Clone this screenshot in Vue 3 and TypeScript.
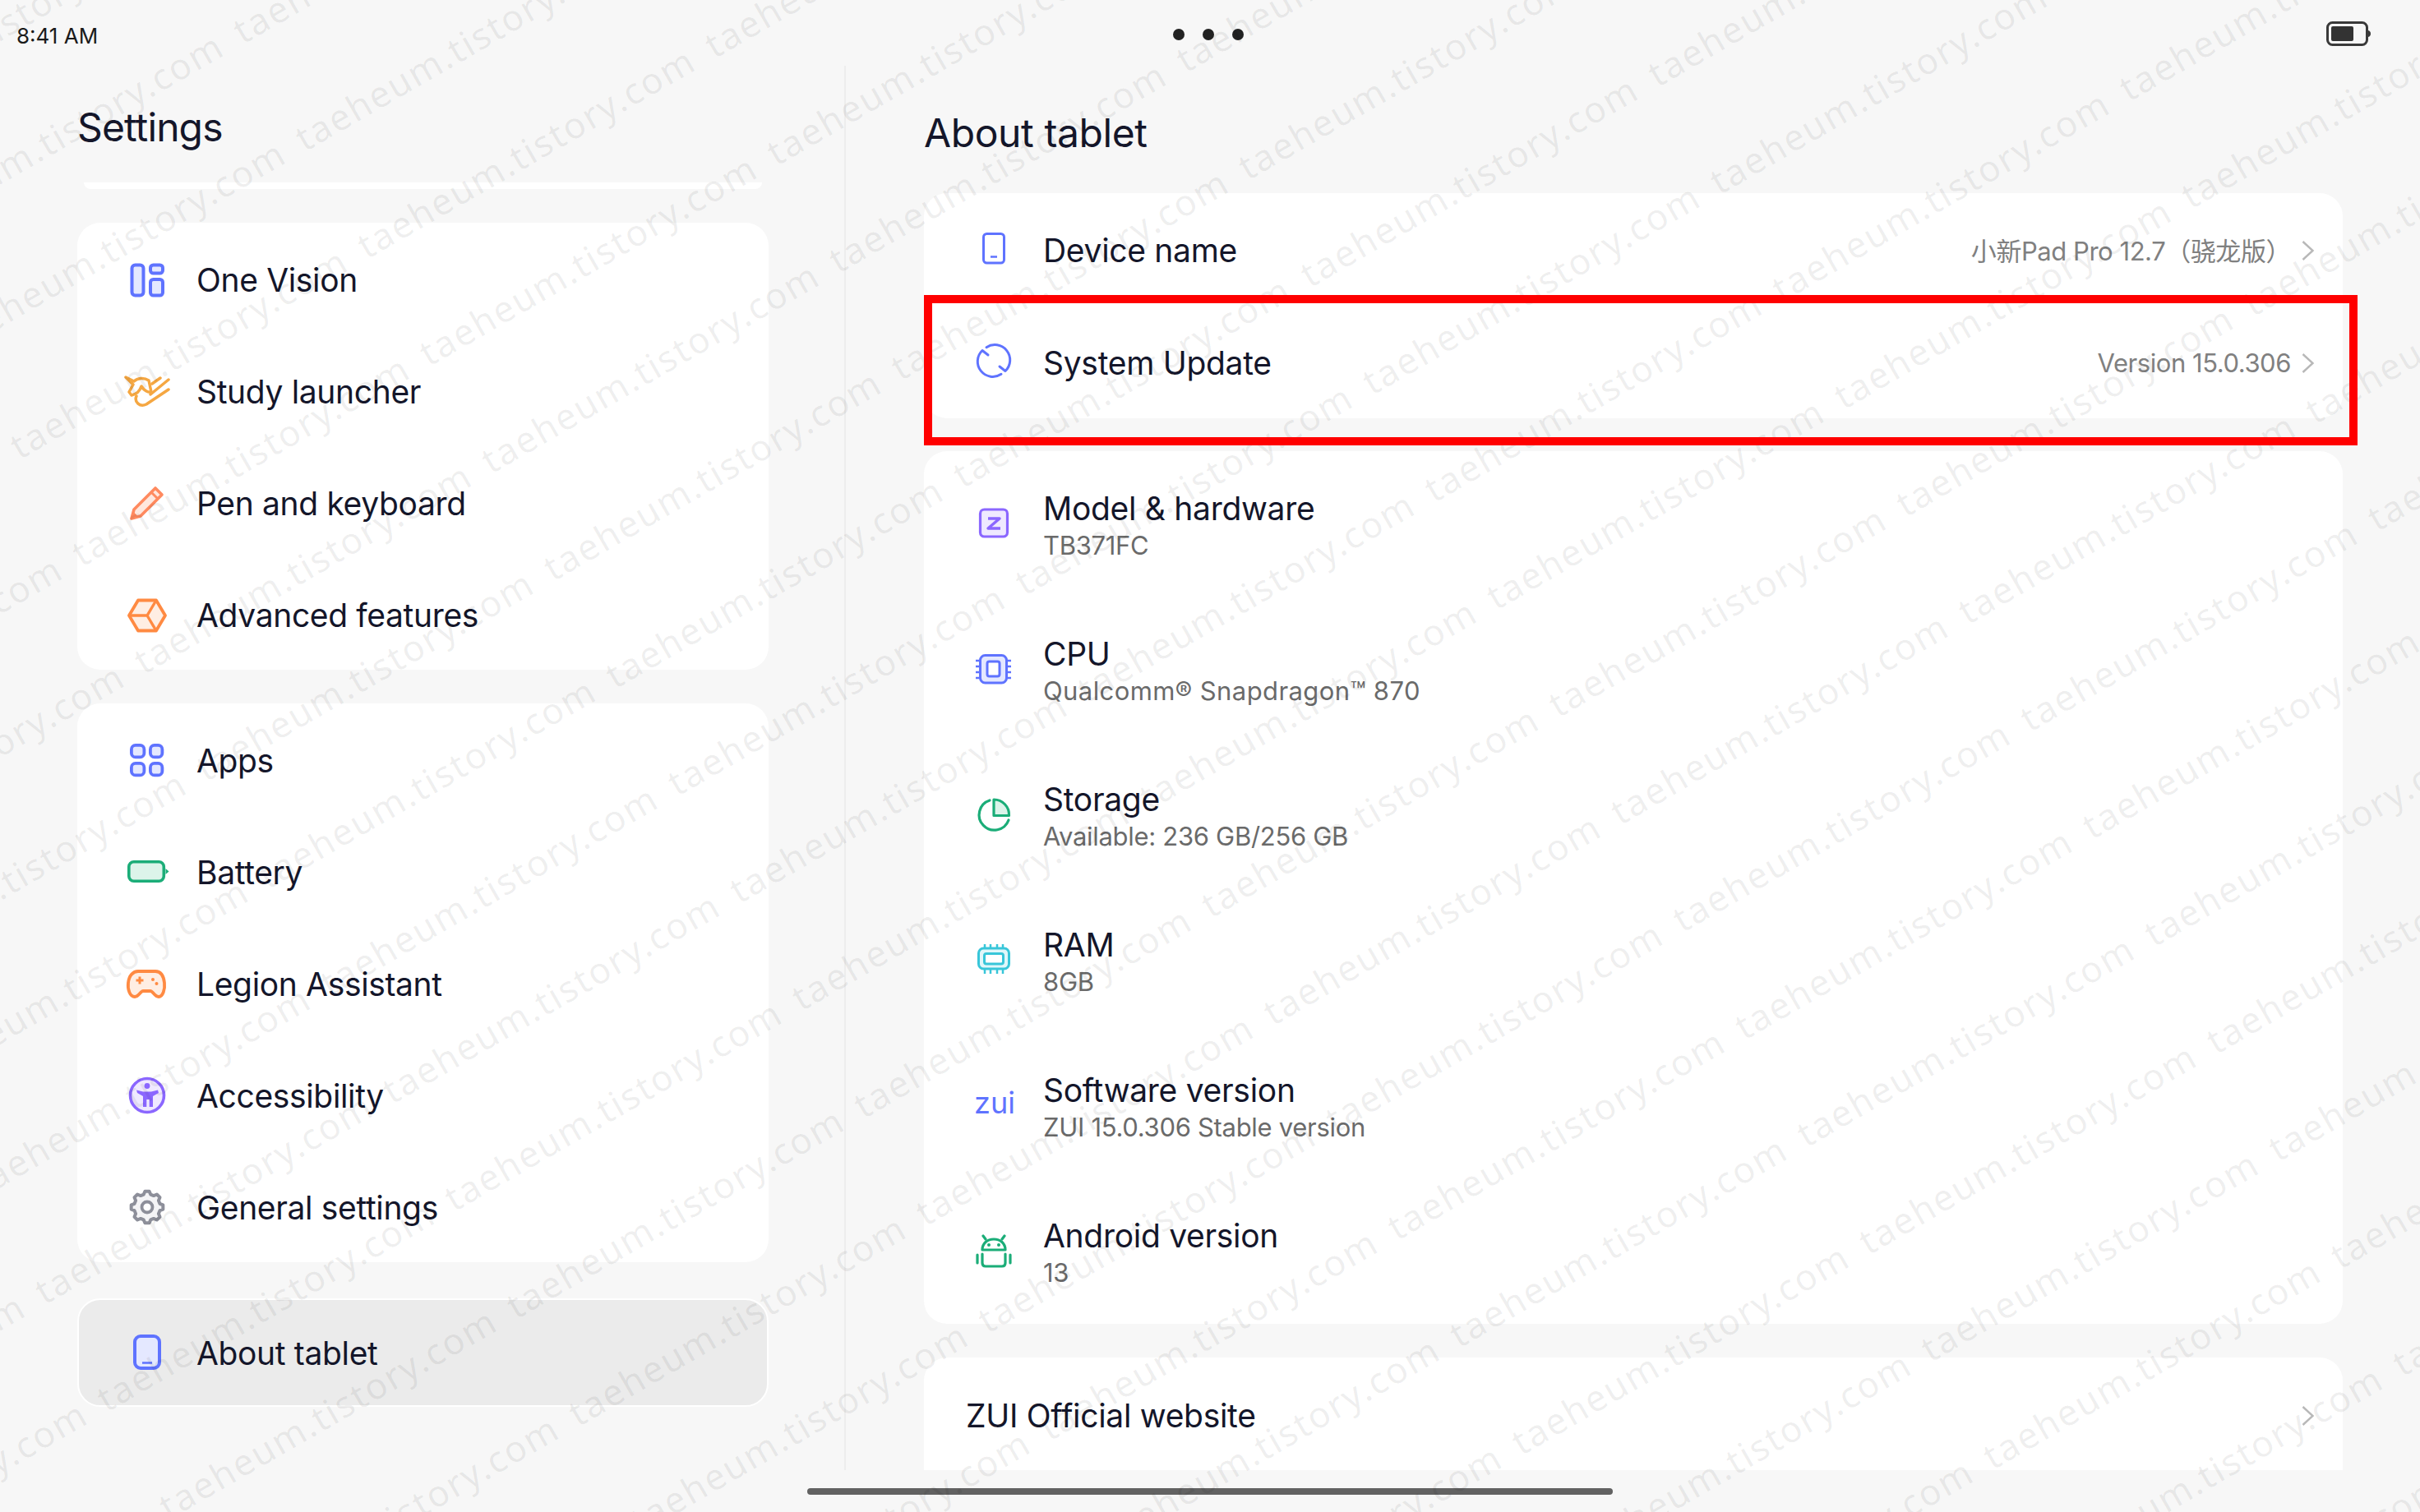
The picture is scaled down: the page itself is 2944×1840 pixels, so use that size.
<script setup lang="ts">
interface NavRow { label: string; icon: string }
interface InfoRow { title: string; sub: string; icon: string; wide?: boolean }

const groupOne: NavRow[] = [
  { label: 'One Vision', icon: 'vision' },
  { label: 'Study launcher', icon: 'study' },
  { label: 'Pen and keyboard', icon: 'pen' },
  { label: 'Advanced features', icon: 'cube' },
]
const groupTwo: NavRow[] = [
  { label: 'Apps', icon: 'apps' },
  { label: 'Battery', icon: 'battery' },
  { label: 'Legion Assistant', icon: 'game' },
  { label: 'Accessibility', icon: 'access' },
  { label: 'General settings', icon: 'gear' },
]
const infoRows: InfoRow[] = [
  { title: 'Model & hardware', sub: 'TB371FC', icon: 'model' },
  { title: 'CPU', sub: 'Qualcomm® Snapdragon™ 870', icon: 'cpu', wide: true },
  { title: 'Storage', sub: 'Available: 236 GB/256 GB', icon: 'storage' },
  { title: 'RAM', sub: '8GB', icon: 'ram' },
  { title: 'Software version', sub: 'ZUI 15.0.306 Stable version', icon: 'zui' },
  { title: 'Android version', sub: '13', icon: 'android' },
]
const wmRows = Array.from({ length: 21 }, (_, i) => i)
const wmCols = Array.from({ length: 9 }, (_, i) => i)
const wmText = 'taeheum.tistory.com'

function gearPath(cx: number, cy: number, outer: number, inner: number, teeth: number): string {
  const pts: string[] = []
  const step = (Math.PI * 2) / teeth
  for (let i = 0; i < teeth; i++) {
    const a = i * step - Math.PI / 2
    const pairs: [number, number][] = [
      [inner, a - step * 0.34],
      [outer, a - step * 0.17],
      [outer, a + step * 0.17],
      [inner, a + step * 0.34],
    ]
    for (const [r, t] of pairs) {
      pts.push(`${(cx + r * Math.cos(t)).toFixed(2)} ${(cy + r * Math.sin(t)).toFixed(2)}`)
    }
  }
  return 'M' + pts.join('L') + 'Z'
}
const gear = gearPath(28, 27, 19.5, 16, 8)
</script>

<template>
  <div class="screen">
    <header class="status">
      <span class="time">8:41 AM</span>
      <div class="dots"><i></i><i></i><i></i></div>
      <svg class="batt" width="54" height="30" viewBox="0 0 54 30">
        <rect x="1.500" y="1.500" width="48" height="27" rx="6" fill="none" stroke="#3a3a3a" stroke-width="3" />
        <rect x="6" y="6" width="27" height="18" rx="2" fill="#333" />
        <path d="M51 11c2 .5 3 2 3 4s-1 3.500-3 4z" fill="#3a3a3a" />
      </svg>
    </header>

    <main class="body">
      <aside class="left">
        <h1 class="left-title">Settings</h1>
        <div class="strip"></div>
        <section class="nav-card">
          <div v-for="r in groupOne" :key="r.label" class="nav-row">
            <svg class="ic" width="56" height="56" viewBox="0 0 56 56" fill="none">
              <template v-if="r.icon === 'vision'">
                <rect x="9.500" y="9.500" width="14" height="37" rx="4" fill="#e4e8ff" stroke="#5f73ff" stroke-width="4" />
                <rect x="32" y="9.500" width="15" height="10" rx="3.500" fill="#e4e8ff" stroke="#5f73ff" stroke-width="4" />
                <rect x="32" y="27" width="15" height="19.500" rx="3.500" fill="#e4e8ff" stroke="#5f73ff" stroke-width="4" />
              </template>
              <template v-else-if="r.icon === 'study'">
                <g stroke="#f5a742" stroke-width="3.500" stroke-linecap="round" stroke-linejoin="round">
                  <path d="M2 10L12 15C16 11 24 10 30 14L33 28C29 29 24 26 21 21C19 27 14 31 9 32L6 28L11 19Z" />
                  <path d="M15 33C12 40 19 47 27 43L54 25M32 31L54 13M34 18L44 11" />
                </g>
              </template>
              <template v-else-if="r.icon === 'pen'">
                <path d="M9 46l3-11 26-26 8 8-26 26z" fill="#ffe7dd" stroke="#ff8a5f" stroke-width="3.600" stroke-linejoin="round" />
                <path d="M9 46l2.500-8 5.500 5.500z" fill="#ff8a5f" />
                <path d="M33 14l8 8" stroke="#ff8a5f" stroke-width="3" />
              </template>
              <template v-else-if="r.icon === 'cube'">
                <path d="M17 9.500h22L50 28 39 46.500H17L6 28z" fill="#ffeee3" stroke="#ff8a42" stroke-width="3.800" stroke-linejoin="round" />
                <path d="M6 28h22l11-18.500M28 28l11 18.500" stroke="#ff8a42" stroke-width="3.400" />
              </template>
            </svg>
            <span class="nav-label">{{ r.label }}</span>
          </div>
        </section>
        <section class="nav-card second">
          <div v-for="r in groupTwo" :key="r.label" class="nav-row">
            <svg class="ic" width="56" height="56" viewBox="0 0 56 56" fill="none">
              <template v-if="r.icon === 'apps'">
                <g fill="#e4e8ff" stroke="#5f73ff" stroke-width="3.800">
                  <rect x="8.900" y="8.900" width="15.500" height="14.500" rx="5" />
                  <rect x="31.900" y="8.900" width="14.500" height="14.500" rx="5" />
                  <rect x="8.900" y="30.900" width="15.500" height="14.500" rx="5" />
                  <rect x="31.900" y="30.900" width="14.500" height="14.500" rx="5" />
                </g>
              </template>
              <template v-else-if="r.icon === 'battery'">
                <rect x="5.800" y="14.800" width="42.500" height="23.500" rx="6" fill="#dcf4ea" stroke="#1bad78" stroke-width="3.600" />
                <path d="M50.500 23l4 3.500-4 3.500z" fill="#1bad78" />
              </template>
              <template v-else-if="r.icon === 'game'">
                <path d="M17 12h21c6 0 10 5 11 14 1 8-2 17-7 17-5 0-7-7-10-7h-9c-3 0-5 7-10 7-6 0-9-9-8-17 1-9 6-14 12-14z" fill="#ffeee3" stroke="#ff8a42" stroke-width="3.800" stroke-linejoin="round" />
                <path d="M14.500 23h9M19 18.500v9" stroke="#ff8a42" stroke-width="3" />
                <circle cx="35" cy="22" r="2" fill="#ff8a42" /><circle cx="39.500" cy="27" r="2" fill="#ff8a42" />
              </template>
              <template v-else-if="r.icon === 'access'">
                <circle cx="28" cy="27" r="20.500" fill="#efe9ff" stroke="#8b67ff" stroke-width="3.600" />
                <circle cx="28" cy="15.500" r="3.400" fill="#8b67ff" />
                <path d="M15 20.500l8 2h10l8-2 1 3.500-7 4v13h-4.300v-9h-3.400v9H23V28l-7-4z" fill="#8b67ff" />
              </template>
              <template v-else-if="r.icon === 'gear'">
                <path :d="gear" fill="#f4f4f6" stroke="#8d8f9a" stroke-width="4" stroke-linejoin="round" />
                <circle cx="28" cy="27" r="6.500" fill="#fff" stroke="#8d8f9a" stroke-width="3.800" />
              </template>
            </svg>
            <span class="nav-label">{{ r.label }}</span>
          </div>
        </section>
        <section class="nav-selected">
          <svg class="ic" width="56" height="56" viewBox="0 0 56 56" fill="none">
            <rect x="13" y="7" width="30" height="39" rx="7" fill="#e4e8ff" stroke="#5f73ff" stroke-width="4" />
            <path d="M22 39.500h12" stroke="#5f73ff" stroke-width="2.500" />
          </svg>
          <span class="nav-label">About tablet</span>
        </section>
      </aside>

      <section class="right">
        <h2 class="right-title">About tablet</h2>
        <div class="card top-card">
          <div class="link-row">
            <svg class="ric" width="56" height="56" viewBox="0 0 56 56" fill="none">
              <rect x="15.500" y="7.500" width="25" height="35.500" rx="4" stroke="#5f73ff" stroke-width="3" />
              <path d="M24 35.500h8" stroke="#5f73ff" stroke-width="2.500" />
            </svg>
            <span class="row-title">Device name</span>
            <span class="value cjk">小新Pad Pro 12.7（骁龙版）</span>
            <svg class="chev" width="16" height="24" viewBox="0 0 16 24" fill="none"><path d="M1.500 1l12 11-12 11" stroke="#b8b8b8" stroke-width="2.400" /></svg>
          </div>
          <div class="link-row">
            <svg class="ric" width="56" height="56" viewBox="0 0 56 56" fill="none">
              <path d="M19 8.700A18.500 18.500 0 0 1 42 37.500L35 32M37 41.300A18.500 18.500 0 0 1 14 12.500L21 18" stroke="#5f73ff" stroke-width="3" stroke-linecap="round" stroke-linejoin="round" />
            </svg>
            <span class="row-title">System Update</span>
            <span class="value">Version 15.0.306</span>
            <svg class="chev" width="16" height="24" viewBox="0 0 16 24" fill="none"><path d="M1.500 1l12 11-12 11" stroke="#b8b8b8" stroke-width="2.400" /></svg>
          </div>
        </div>
        <div class="card info-card">
          <div v-for="r in infoRows" :key="r.title" class="info-row">
            <svg class="ric" width="56" height="56" viewBox="0 0 56 56" fill="none">
              <template v-if="r.icon === 'model'">
                <rect x="11.500" y="10" width="33" height="33" rx="5" fill="#efe9ff" stroke="#8b67ff" stroke-width="3.200" />
                <path d="M21 21h14L21 33h15" stroke="#8b67ff" stroke-width="3.400" stroke-linejoin="round" />
              </template>
              <template v-else-if="r.icon === 'cpu'">
                <rect x="11.500" y="10.500" width="32" height="33.500" rx="6" fill="#e4e8ff" stroke="#5f73ff" stroke-width="3" />
                <rect x="20" y="18" width="15" height="18" rx="2.500" fill="#fff" stroke="#5f73ff" stroke-width="3" />
                <path d="M6 17h5M6 24h5M6 31h5M6 38h5M44 17h5M44 24h5M44 31h5M44 38h5" stroke="#5f73ff" stroke-width="2.500" />
              </template>
              <template v-else-if="r.icon === 'storage'">
                <path d="M23 10A18.500 18.500 0 1 0 46 34" stroke="#1bad78" stroke-width="3.200" stroke-linecap="round" />
                <path d="M28 9a18.500 18.500 0 0 1 18.500 19.500H28z" fill="#dcf4ea" stroke="#1bad78" stroke-width="3.200" stroke-linejoin="round" />
              </template>
              <template v-else-if="r.icon === 'ram'">
                <rect x="9.500" y="13" width="37" height="25" rx="6" fill="#e0f7fa" stroke="#38c6d9" stroke-width="3" />
                <rect x="16.500" y="19.500" width="23" height="12.500" rx="2.500" fill="#fff" stroke="#38c6d9" stroke-width="3" />
                <path d="M17 8v5M24 8v5M32 8v5M39 8v5M17 38v6M24 38v6M32 38v6M39 38v6" stroke="#38c6d9" stroke-width="2.500" />
              </template>
              <template v-else-if="r.icon === 'android'">
                <g stroke="#1bad78" stroke-width="3.200" stroke-linecap="round" stroke-linejoin="round">
                  <path d="M14 26c0-8 6-13 14-13s14 5 14 13z" />
                  <path d="M14 31v11c0 3 2 4 4 4h20c2 0 4-1 4-4V31M8 32v10M48 32v10M15 9l3 4M41 9l-3 4" />
                </g>
                <circle cx="22" cy="20" r="2" fill="#1bad78" /><circle cx="34" cy="20" r="2" fill="#1bad78" />
              </template>
            </svg>
            <span v-if="r.icon === 'zui'" class="zui">zui</span>
            <div class="info-text">
              <span class="row-title">{{ r.title }}</span>
              <span class="row-sub" :class="{ wide: r.wide }">{{ r.sub }}</span>
            </div>
          </div>
        </div>
        <div class="card web-card">
          <span class="row-title">ZUI Official website</span>
          <svg class="chev" width="16" height="24" viewBox="0 0 16 24" fill="none"><path d="M1.500 1l12 11-12 11" stroke="#b8b8b8" stroke-width="2.400" /></svg>
        </div>
      </section>
    </main>

    <footer class="home"><div class="home-bar"></div></footer>

    <div class="watermark">
      <div class="wm-plane">
        <div v-for="y in wmRows" :key="y" class="wm-row">
          <span v-for="x in wmCols" :key="x">{{ wmText }}</span>
        </div>
      </div>
    </div>

    <div class="highlight"></div>
  </div>
</template>

<style>
html, body { margin: 0; padding: 0; background: #f7f7f7; }
</style>

<style scoped>
.screen {
  position: relative;
  width: 2944px;
  height: 1840px;
  overflow: hidden;
  background: #f7f7f7;
  display: flex;
  flex-direction: column;
  font-family: Inter, "Noto Sans CJK SC", sans-serif;
  color: #14162a;
}
.status {
  height: 80px;
  flex: none;
  display: flex;
  align-items: center;
  justify-content: space-between;
  position: relative;
  padding: 0 60px 0 20px;
  box-sizing: border-box;
}
.time { font-size: 26px; color: #1a1a1a; margin-top: 6px; }
.dots { position: absolute; left: 1427px; top: 35px; display: flex; gap: 22px; }
.dots i { width: 14px; height: 14px; border-radius: 50%; background: #222; display: block; }
.batt { margin-top: 2px; }
.body { flex: none; height: 1709px; display: flex; overflow: hidden; }
.left {
  width: 1029px;
  box-sizing: border-box;
  border-right: 2px solid #ededed;
  padding: 0 92px 0 94px;
  flex: none;
  display: flex;
  flex-direction: column;
}
.left-title { margin: 42px 0 0; font-size: 48px; letter-spacing: -0.9px; line-height: 66px; font-weight: 400; height: 100px; }
.strip { height: 8px; margin: 0 8px; background: #fff; border-radius: 0 0 10px 10px; flex: none; }
.nav-card {
  margin-top: 41px;
  background: #fff;
  border-radius: 28px;
  flex: none;
}
.nav-card.second { margin-top: 41px; }
.nav-row { height: 136px; box-sizing: border-box; padding: 3px 0 0 57px; display: flex; align-items: center; }
.ic { flex: none; margin-right: 32px; }
.nav-label { font-size: 39px; letter-spacing: -0.35px; line-height: 52px; }
.nav-selected {
  margin-top: 44px;
  height: 132px;
  box-sizing: border-box;
  background: #ebebeb;
  border: 2px solid #fff;
  border-radius: 28px;
  display: flex;
  align-items: center;
  padding: 2px 0 0 55px;
  flex: none;
}
.right { flex: 1; min-width: 0; padding: 0 94px 0 95px; display: flex; flex-direction: column; }
.right-title { margin: 50px 0 0; font-size: 48px; letter-spacing: -0.4px; line-height: 64px; font-weight: 400; height: 105px; flex: none; }
.card { background: #fff; border-radius: 28px; flex: none; }
.top-card { height: 274px; display: flex; flex-direction: column; overflow: hidden; }
.link-row { height: 137px; box-sizing: border-box; padding: 2px 34px 0 57px; display: flex; align-items: center; flex: none; }
.ric { flex: none; margin-right: 32px; }
.row-title { font-size: 39px; letter-spacing: -0.3px; line-height: 50px; }
.value { margin-left: auto; font-size: 31px; letter-spacing: -0.45px; color: #808080; margin-right: 13px; }
.value.cjk { margin-top: -3px; }
.info-card { margin-top: 40px; height: 1062px; }
.info-row { height: 177px; display: flex; align-items: center; padding-left: 57px; position: relative; }
.zui {
  position: absolute;
  left: 61px;
  top: 50%;
  margin-top: -30px;
  font-size: 36px;
  color: #5f73ff;
  line-height: 52px;
}
.info-text { display: flex; flex-direction: column; padding-top: 2px; }
.row-sub { font-size: 31px; letter-spacing: -0.3px; line-height: 40px; color: #6a6a6a; }
.row-sub.wide { letter-spacing: 0.4px; }
.web-card {
  margin-top: 41px;
  height: 160px;
  box-sizing: border-box;
  border-radius: 28px 28px 0 0;
  display: flex;
  align-items: flex-start;
  justify-content: space-between;
  padding: 46px 34px 0 51px;
}
.web-card .chev { margin-top: 13px; }
.home { flex: 1; display: flex; justify-content: center; padding-top: 22px; box-sizing: border-box; }
.home-bar { width: 980px; height: 8px; border-radius: 4px; background: #626262; }
.highlight {
  position: absolute;
  left: 1124px;
  top: 359px;
  width: 1744px;
  height: 183px;
  box-sizing: border-box;
  border: 10px solid #ff0000;
  pointer-events: none;
}
.watermark { position: absolute; inset: 0; overflow: hidden; pointer-events: none; }
.wm-plane {
  position: absolute;
  left: -1094px;
  top: 576px;
  width: 4400px;
  transform: rotate(-30deg);
  transform-origin: 0 0;
}
.wm-row {
  white-space: nowrap;
  height: 151px;
  font-family: "Noto Sans", sans-serif;
  font-size: 44px;
  letter-spacing: 2px;
  line-height: 151px;
  color: rgba(0, 0, 0, 0.07);
}
.wm-row span { display: inline-block; width: 488px; }
</style>
